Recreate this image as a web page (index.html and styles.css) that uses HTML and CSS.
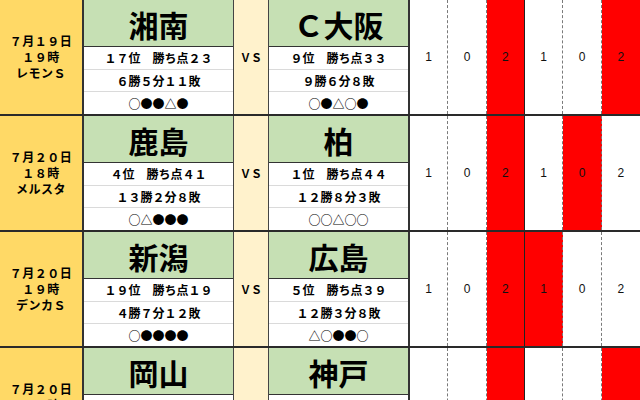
FILE: index.html
```html
<!DOCTYPE html>
<html lang="ja">
<head>
<meta charset="utf-8">
<title>試合予想</title>
<link rel="stylesheet" href="styles.css">
</head>
<body>
<div class="sheet">
  <div class="block">
    <div class="date"><span>７月１９日</span><span>１９時</span><span>レモンＳ</span></div>
    <div class="team">
      <div class="name">湘南</div>
      <div class="info">１７位　勝ち点２３</div>
      <div class="info">６勝５分１１敗</div>
      <div class="info">○●●△●</div>
    </div>
    <div class="vs">ＶＳ</div>
    <div class="team away">
      <div class="name">Ｃ大阪</div>
      <div class="info">９位　勝ち点３３</div>
      <div class="info">９勝６分８敗</div>
      <div class="info">○●△○●</div>
    </div>
    <div class="res">1</div>
    <div class="res">0</div>
    <div class="res red sep">2</div>
    <div class="res">1</div>
    <div class="res">0</div>
    <div class="res red last">2</div>
  </div>
  <div class="block">
    <div class="date"><span>７月２０日</span><span>１８時</span><span>メルスタ</span></div>
    <div class="team">
      <div class="name">鹿島</div>
      <div class="info">４位　勝ち点４１</div>
      <div class="info">１３勝２分８敗</div>
      <div class="info">○△●●●</div>
    </div>
    <div class="vs">ＶＳ</div>
    <div class="team away">
      <div class="name">柏</div>
      <div class="info">１位　勝ち点４４</div>
      <div class="info">１２勝８分３敗</div>
      <div class="info">○○△○○</div>
    </div>
    <div class="res">1</div>
    <div class="res">0</div>
    <div class="res red sep">2</div>
    <div class="res">1</div>
    <div class="res red">0</div>
    <div class="res last">2</div>
  </div>
  <div class="block">
    <div class="date"><span>７月２０日</span><span>１９時</span><span>デンカＳ</span></div>
    <div class="team">
      <div class="name">新潟</div>
      <div class="info">１９位　勝ち点１９</div>
      <div class="info">４勝７分１２敗</div>
      <div class="info">○●●●●</div>
    </div>
    <div class="vs">ＶＳ</div>
    <div class="team away">
      <div class="name">広島</div>
      <div class="info">５位　勝ち点３９</div>
      <div class="info">１２勝３分８敗</div>
      <div class="info">△○●●○</div>
    </div>
    <div class="res">1</div>
    <div class="res">0</div>
    <div class="res red sep">2</div>
    <div class="res red">1</div>
    <div class="res">0</div>
    <div class="res last">2</div>
  </div>
  <div class="block">
    <div class="date"><span>７月２０日</span><span>１９時</span><span>ＪＦＥ晴</span></div>
    <div class="team">
      <div class="name">岡山</div>
      <div class="info">１８位　勝ち点２５</div>
      <div class="info">６勝７分１０敗</div>
      <div class="info">●△○●●</div>
    </div>
    <div class="vs">ＶＳ</div>
    <div class="team away">
      <div class="name">神戸</div>
      <div class="info">３位　勝ち点４１</div>
      <div class="info">１２勝５分６敗</div>
      <div class="info">○○●△○</div>
    </div>
    <div class="res">1</div>
    <div class="res">0</div>
    <div class="res red sep">2</div>
    <div class="res">1</div>
    <div class="res">0</div>
    <div class="res red last">2</div>
  </div>
</div>
</body>
</html>
```

FILE: styles.css
```css
html, body {
  margin: 0;
  padding: 0;
}
body {
  width: 640px;
  height: 400px;
  overflow: hidden;
  background: #ffffff;
  font-family: "Noto Sans CJK JP", "Noto Sans", sans-serif;
  color: #000;
}
.sheet {
  display: flex;
  flex-direction: column;
}
.block {
  display: grid;
  grid-template-columns: 84px 150px 35px 141px repeat(6, 1fr);
  height: 116px;
  flex: none;
  box-sizing: border-box;
  border-bottom: 2px solid #2a2a2a;
}
.date {
  background: #ffd966;
  border-right: 2px solid #333;
  display: flex;
  flex-direction: column;
  justify-content: center;
  align-items: center;
  font-size: 12px;
  font-weight: 700;
  line-height: 16px;
  letter-spacing: 0.5px;
}
.date span {
  display: block;
  height: 16px;
}
.team {
  display: flex;
  flex-direction: column;
  border-right: 1px solid #444;
  background: #fff;
}
.team.away {
  border-right: 2px solid #333;
}
.name {
  height: 47px;
  flex: none;
  box-sizing: border-box;
  background: #c6e0b4;
  border-bottom: 1px solid #333;
  display: flex;
  align-items: center;
  justify-content: center;
  font-size: 30px;
  font-weight: 700;
  padding-top: 2px;
  line-height: 1;
}
.info {
  flex: 1;
  display: flex;
  align-items: center;
  justify-content: center;
  font-size: 12px;
  font-weight: 700;
  border-bottom: 1px solid #dadada;
}
.info:last-child {
  border-bottom: none;
}
.vs {
  background: #fff2cc;
  border-right: 1px solid #444;
  display: flex;
  align-items: center;
  justify-content: center;
  font-size: 11px;
  font-weight: 700;
}
.res {
  display: flex;
  align-items: center;
  justify-content: center;
  font-family: "Liberation Sans", Arial, sans-serif;
  font-size: 12px;
  color: #111;
  border-right: 1px dashed #7a7a7a;
  background: #fff;
}
.res.red {
  background: #ff0000;
}
.res.sep {
  border-right: 1px solid #222;
}
.res.last {
  border-right: none;
}
```
